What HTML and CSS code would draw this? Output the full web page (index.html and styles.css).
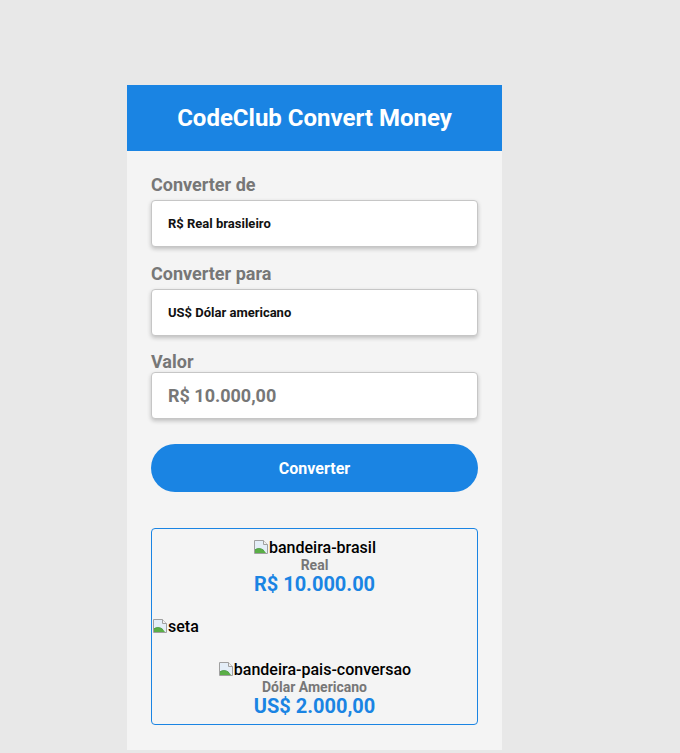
FILE: index.html
```html
<!DOCTYPE html>
<html lang="pt-BR">
<head>
<meta charset="utf-8">
<title>CodeClub Convert Money</title>
<link rel="stylesheet" href="styles.css">
</head>
<body>
<main class="card">
  <header class="card-header">
    <h1 class="title">CodeClub Convert Money</h1>
  </header>
  <section class="card-body">
    <label class="label" for="de">Converter de</label>
    <select class="field select" id="de">
      <option>R$ Real brasileiro</option>
    </select>
    <label class="label label-second" for="para">Converter para</label>
    <select class="field select" id="para">
      <option>US$ Dólar americano</option>
    </select>
    <label class="label label-tight" for="valor">Valor</label>
    <input class="field input" id="valor" type="text" value="R$ 10.000,00">
    <button class="btn" type="button">Converter</button>

    <div class="result">
      <div class="currency">
        <span class="broken"><svg class="broken-icon" viewBox="0 0 16 16" width="16" height="16"><path d="M1.5 1.5h9l4 4v9h-13z" fill="#fff" stroke="#a0a0a0"/><path d="M2 2h8.5v4H14v8H2z" fill="#e4eef8"/><path d="M2 14v-3.2C5 8.6 8.4 9 11.5 12L13 14z" fill="#5aae46"/><path d="M2 10.9c3-2.2 6.2-1.8 9 0.8" fill="none" stroke="#3a8f30" stroke-width="0.8"/><path d="M10.5 1.5v4h4" fill="#f0f0f0" stroke="#a0a0a0"/></svg>bandeira-brasil</span>
        <p class="currency-name">Real</p>
        <p class="currency-value">R$ 10.000.00</p>
      </div>
      <div class="arrow-row">
        <span class="broken"><svg class="broken-icon" viewBox="0 0 16 16" width="16" height="16"><path d="M1.5 1.5h9l4 4v9h-13z" fill="#fff" stroke="#a0a0a0"/><path d="M2 2h8.5v4H14v8H2z" fill="#e4eef8"/><path d="M2 14v-3.2C5 8.6 8.4 9 11.5 12L13 14z" fill="#5aae46"/><path d="M2 10.9c3-2.2 6.2-1.8 9 0.8" fill="none" stroke="#3a8f30" stroke-width="0.8"/><path d="M10.5 1.5v4h4" fill="#f0f0f0" stroke="#a0a0a0"/></svg>seta</span>
      </div>
      <div class="currency currency-to">
        <span class="broken"><svg class="broken-icon" viewBox="0 0 16 16" width="16" height="16"><path d="M1.5 1.5h9l4 4v9h-13z" fill="#fff" stroke="#a0a0a0"/><path d="M2 2h8.5v4H14v8H2z" fill="#e4eef8"/><path d="M2 14v-3.2C5 8.6 8.4 9 11.5 12L13 14z" fill="#5aae46"/><path d="M2 10.9c3-2.2 6.2-1.8 9 0.8" fill="none" stroke="#3a8f30" stroke-width="0.8"/><path d="M10.5 1.5v4h4" fill="#f0f0f0" stroke="#a0a0a0"/></svg>bandeira-pais-conversao</span>
        <p class="currency-name">Dólar Americano</p>
        <p class="currency-value">US$ 2.000,00</p>
      </div>
    </div>
  </section>
</main>
</body>
</html>
```

FILE: styles.css
```css
* { box-sizing: border-box; }

html, body {
  margin: 0;
  padding: 0;
}

body {
  background: #e8e8e8;
  font-family: Roboto, "Liberation Sans", Arial, sans-serif;
  height: 750px;
}

.card {
  width: 375px;
  margin: 0 0 0 127px;
  position: relative;
  top: 85px;
  background: #f4f4f4;
}

.card-header {
  height: 66px;
  background: #1a84e3;
  display: flex;
  align-items: center;
  justify-content: center;
}

.title {
  margin: 0;
  color: #ffffff;
  font-size: 24px;
  font-weight: 700;
  line-height: 28px;
}

.card-body {
  padding: 23px 24px 25px;
  display: flex;
  flex-direction: column;
}

.label {
  display: block;
  font-size: 18px;
  line-height: 21px;
  font-weight: 700;
  color: #777777;
  margin: 0 0 5px;
}

.label-second { margin-top: 16px; }

.label-tight {
  margin-top: 15px;
  margin-bottom: 0;
}

.field {
  width: 327px;
  height: 47px;
  border: 1px solid #c6c6c6;
  border-radius: 4px;
  background: #ffffff;
  box-shadow: 0 2px 4px rgba(0, 0, 0, 0.22);
  padding: 0 0 0 16px;
  font-family: Roboto, "Liberation Sans", Arial, sans-serif;
  font-weight: 700;
  outline: none;
}

.select {
  -webkit-appearance: none;
  appearance: none;
  font-size: 13px;
  color: #111111;
}

.input {
  font-size: 18px;
  color: #777777;
}

.btn {
  margin-top: 25px;
  width: 327px;
  height: 48px;
  border: none;
  border-radius: 24px;
  background: #1a84e3;
  color: #ffffff;
  font-family: Roboto, "Liberation Sans", Arial, sans-serif;
  font-size: 16px;
  font-weight: 700;
}

.result {
  margin-top: 36px;
  width: 327px;
  height: 197px;
  border: 1px solid #1a84e3;
  border-radius: 4px;
  padding-top: 9px;
}

.currency {
  display: flex;
  flex-direction: column;
  align-items: center;
}

.broken {
  display: inline-flex;
  align-items: flex-start;
  font-size: 16px;
  line-height: 19px;
  font-weight: 500;
  color: #000000;
}

.broken-icon {
  margin-top: 1px;
  flex: none;
}

.currency-name {
  margin: 0;
  font-size: 14px;
  line-height: 16px;
  font-weight: 700;
  color: #777777;
}

.currency-value {
  margin: 0;
  font-size: 20px;
  line-height: 23px;
  font-weight: 700;
  color: #1a84e3;
}

.arrow-row {
  margin-top: 21px;
  display: flex;
}

.currency-to {
  margin-top: 24px;
}
```
